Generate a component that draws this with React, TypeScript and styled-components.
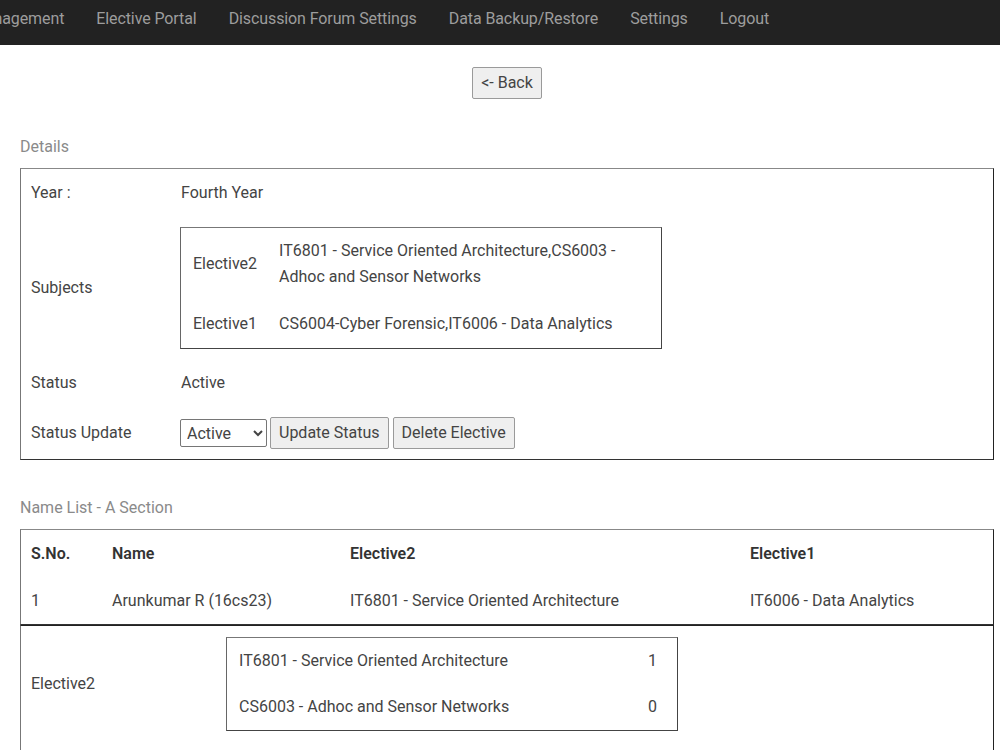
import React from "react";
import styled, { createGlobalStyle } from "styled-components";

const Global = createGlobalStyle`
  html, body { margin: 0; padding: 0; background: #fff; }
  body {
    font-family: Roboto, "Liberation Sans", Arial, sans-serif;
    font-size: 16px;
    color: #444;
    overflow: hidden;
  }
`;

const NavBar = styled.nav`
  height: 45px;
  background: #222;
  overflow: hidden;
  white-space: nowrap;
`;

const NavList = styled.ul`
  display: flex;
  margin: 0 0 0 -45px;
  padding: 0;
  list-style: none;
`;

const NavItem = styled.li`
  padding: 8px 16px 0;
  line-height: 22px;
  color: #9d9d9d;
  font-size: 16px;
  letter-spacing: -0.1px;
  flex: none;
`;

const Main = styled.main`
  padding: 0 6px 0 20px;
`;

const BackRow = styled.div`
  display: flex;
  justify-content: center;
  padding-top: 22px;
`;

const NativeButton = styled.button`
  font-family: inherit;
  font-size: 16px;
  color: #444;
  background: #efefef;
  border: 1px solid #9a9a9a;
  border-radius: 2px;
  height: 32px;
  padding: 0 8px;
  line-height: 30px;
`;

const SectionLabel = styled.div<{ $top: number }>`
  margin-top: ${(p) => p.$top}px;
  line-height: 26px;
  color: #8a8a8a;
  margin-bottom: 8px;
`;

const Box = styled.table`
  width: 100%;
  border-collapse: separate;
  border-spacing: 0;
  border: 1px solid #555;
  border-top-color: #888;
  border-left-color: #777;
  border-right-color: #222;
  border-bottom-color: #333;
  table-layout: fixed;
`;

const Cell = styled.td<{ $w?: number; $bold?: boolean }>`
  box-sizing: border-box;
  width: ${(p) => (p.$w ? `${p.$w}px` : "auto")};
  padding: 11px 10px 10px;
  line-height: 26px;
  vertical-align: middle;
  text-align: left;
  font-weight: ${(p) => (p.$bold ? 600 : 400)};
  color: ${(p) => (p.$bold ? "#333" : "#444")};
`;

const InnerBox = styled.table<{ $w: number }>`
  width: ${(p) => p.$w}px;
  border-collapse: separate;
  border-spacing: 0;
  border: 1px solid #444;
  border-top-color: #777;
  border-left-color: #666;
  table-layout: fixed;
  margin-left: -1px;
`;

const InnerCell = styled.td<{ $w?: number; $pv: number }>`
  box-sizing: border-box;
  width: ${(p) => (p.$w ? `${p.$w}px` : "auto")};
  padding: ${(p) => p.$pv}px 12px ${(p) => p.$pv}px 12px;
  line-height: 26px;
  vertical-align: middle;
`;

const SubjectCell = styled(InnerCell)`
  padding-left: 10px;
  padding-right: 40px;
`;

const ControlRow = styled.div`
  display: flex;
  align-items: center;
  gap: 3px;
  margin-left: -1px;
`;

const Select = styled.select`
  font-family: inherit;
  font-size: 16px;
  color: #444;
  width: 87px;
  height: 28px;
  border: 1px solid #767676;
  border-radius: 2px;
  background: #fff;
  padding: 0 2px;
`;

const ButtonGroup = styled.div`
  display: flex;
  gap: 4px;
`;

const SecondTable = styled(Box)`
  border-top-color: #222;
`;

const CountCell = styled(InnerCell)`
  padding-left: 12px;
`;

type Count = { subject: string; count: number };

const summary: { elective: string; counts: Count[] }[] = [
  {
    elective: "Elective2",
    counts: [
      { subject: "IT6801 - Service Oriented Architecture", count: 1 },
      { subject: "CS6003 - Adhoc and Sensor Networks", count: 0 },
    ],
  },
  {
    elective: "Elective1",
    counts: [
      { subject: "CS6004-Cyber Forensic", count: 0 },
      { subject: "IT6006 - Data Analytics", count: 1 },
    ],
  },
];

export default function App() {
  return (
    <>
      <Global />
      <NavBar>
        <NavList>
          <NavItem>Management</NavItem>
          <NavItem>Elective Portal</NavItem>
          <NavItem>Discussion Forum Settings</NavItem>
          <NavItem>Data Backup/Restore</NavItem>
          <NavItem>Settings</NavItem>
          <NavItem>Logout</NavItem>
        </NavList>
      </NavBar>
      <Main>
        <BackRow>
          <NativeButton>&lt;- Back</NativeButton>
        </BackRow>

        <SectionLabel $top={35}>Details</SectionLabel>
        <Box>
          <tbody>
            <tr>
              <Cell $w={150}>Year :</Cell>
              <Cell>Fourth Year</Cell>
            </tr>
            <tr>
              <Cell $w={150}>Subjects</Cell>
              <Cell>
                <InnerBox $w={482}>
                  <tbody>
                    <tr>
                      <InnerCell $w={88} $pv={10}>Elective2</InnerCell>
                      <SubjectCell $pv={10}>
                        IT6801 - Service Oriented Architecture,CS6003 - Adhoc and Sensor Networks
                      </SubjectCell>
                    </tr>
                    <tr>
                      <InnerCell $w={88} $pv={11}>Elective1</InnerCell>
                      <SubjectCell $pv={11}>CS6004-Cyber Forensic,IT6006 - Data Analytics</SubjectCell>
                    </tr>
                  </tbody>
                </InnerBox>
              </Cell>
            </tr>
            <tr>
              <Cell $w={150}>Status</Cell>
              <Cell>Active</Cell>
            </tr>
            <tr>
              <Cell $w={150}>Status Update</Cell>
              <Cell>
                <ControlRow>
                  <Select defaultValue="Active">
                    <option>Active</option>
                    <option>Inactive</option>
                  </Select>
                  <ButtonGroup>
                    <NativeButton>Update Status</NativeButton>
                    <NativeButton>Delete Elective</NativeButton>
                  </ButtonGroup>
                </ControlRow>
              </Cell>
            </tr>
          </tbody>
        </Box>

        <SectionLabel $top={35}>Name List - A Section</SectionLabel>
        <Box>
          <tbody>
            <tr>
              <Cell $w={81} $bold>S.No.</Cell>
              <Cell $w={238} $bold>Name</Cell>
              <Cell $w={400} $bold>Elective2</Cell>
              <Cell $bold>Elective1</Cell>
            </tr>
            <tr>
              <Cell $w={81}>1</Cell>
              <Cell $w={238}>Arunkumar R (16cs23)</Cell>
              <Cell $w={400}>IT6801 - Service Oriented Architecture</Cell>
              <Cell>IT6006 - Data Analytics</Cell>
            </tr>
          </tbody>
        </Box>
        <SecondTable>
          <tbody>
            {summary.map((s) => (
              <tr key={s.elective}>
                <Cell $w={196}>{s.elective}</Cell>
                <Cell>
                  <InnerBox $w={452}>
                    <tbody>
                      {s.counts.map((c) => (
                        <tr key={c.subject}>
                          <InnerCell $w={409} $pv={10}>{c.subject}</InnerCell>
                          <CountCell $pv={10}>{c.count}</CountCell>
                        </tr>
                      ))}
                    </tbody>
                  </InnerBox>
                </Cell>
              </tr>
            ))}
          </tbody>
        </SecondTable>
      </Main>
    </>
  );
}
